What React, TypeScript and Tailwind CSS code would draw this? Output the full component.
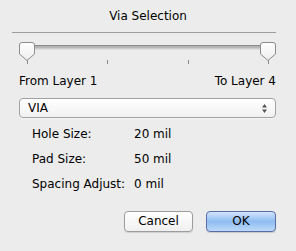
import React from "react";

const ROWS = [
  { label: "Hole Size:", value: "20 mil" },
  { label: "Pad Size:", value: "50 mil" },
  { label: "Spacing Adjust:", value: "0 mil" },
];

function Thumb({ x }: { x: number }) {
  // pentagon knob, 16px wide, pointing down
  return (
    <g>
      <path
        d={`M${x + 0.5} 3 Q${x + 0.5} 0.5 ${x + 3} 0.5 L${x + 13} 0.5 Q${x + 15.5} 0.5 ${x + 15.5} 3 L${x + 15.5} 12 L${x + 8} 18.5 L${x + 0.5} 12 Z`}
        fill="url(#knob)"
        stroke="#8c8c8c"
      />
    </g>
  );
}

function LayerSlider() {
  const ticks = [8, 88, 169, 249];
  return (
    <svg width="258" height="23" viewBox="0 0 258 23" className="block">
      <defs>
        <linearGradient id="knob" x1="0" y1="0" x2="0" y2="1">
          <stop offset="0" stopColor="#ffffff" />
          <stop offset="1" stopColor="#ececec" />
        </linearGradient>
      </defs>
      <rect x="14" y="3" width="230" height="1" fill="#8a8a8a" />
      <rect x="14" y="4" width="230" height="2" fill="#b6b6b6" />
      <rect x="14" y="6" width="230" height="1" fill="#cbcbcb" />
      <rect x="14" y="7" width="230" height="1" fill="#dedede" />
      {ticks.map((t) => (
        <rect key={t} x={t} y="18" width="1" height="4" fill="#8a8a8a" />
      ))}
      <Thumb x={0} />
      <Thumb x={241} />
    </svg>
  );
}

function PopupArrows() {
  return (
    <svg width="7" height="11" viewBox="0 0 7 11" className="block">
      <path d="M3.5 1 L6 4.5 L1 4.5 Z" fill="#555" />
      <path d="M3.5 10 L6 6.5 L1 6.5 Z" fill="#555" />
    </svg>
  );
}

export default function App() {
  return (
    <div
      className="w-[296px] h-[251px] bg-[#ececec] flex flex-col text-[12px] leading-[15px] text-black"
      style={{ fontFamily: '"DejaVu Sans", "Liberation Sans", sans-serif' }}
    >
      <div className="pt-[9px] h-[24px] text-center">Via Selection</div>

      <div className="mt-[8px] ml-[12px] w-[264px] h-px bg-[#9d9d9d]" />

      <div className="mt-[9px] ml-[19px]">
        <LayerSlider />
      </div>

      <div className="mt-[9px] ml-[19px] w-[257px] flex justify-between">
        <span>From Layer 1</span>
        <span>To Layer 4</span>
      </div>

      <div className="mt-[9px] ml-[19px] w-[257px] h-[20px] flex items-center justify-between rounded-[4px] border border-[#a2a2a2] bg-gradient-to-b from-white to-[#f1f1f1] shadow-[0_1px_0_rgba(255,255,255,0.6)] pl-[8px] pr-[7px]">
        <span>VIA</span>
        <PopupArrows />
      </div>

      <div className="mt-[9px] ml-[32px] grid grid-cols-[102px_auto] gap-y-[10px]">
        {ROWS.map((r) => (
          <React.Fragment key={r.label}>
            <span>{r.label}</span>
            <span>{r.value}</span>
          </React.Fragment>
        ))}
      </div>

      <div className="mt-[19px] mr-[20px] flex justify-end gap-[13px]">
        <button className="w-[69px] h-[21px] rounded-[4px] border border-[#9c9c9c] bg-gradient-to-b from-white to-[#f0f0f0] shadow-[0_1px_1px_rgba(0,0,0,0.12)] text-[12px] leading-[15px]">
          Cancel
        </button>
        <button className="w-[70px] h-[21px] rounded-[4px] border border-[#5b6da6] bg-gradient-to-b from-[#d2e4fa] via-[#8fbdf1] to-[#bcd9f8] shadow-[0_1px_1px_rgba(0,0,0,0.15)] text-[12px] leading-[15px]">
          OK
        </button>
      </div>
    </div>
  );
}
